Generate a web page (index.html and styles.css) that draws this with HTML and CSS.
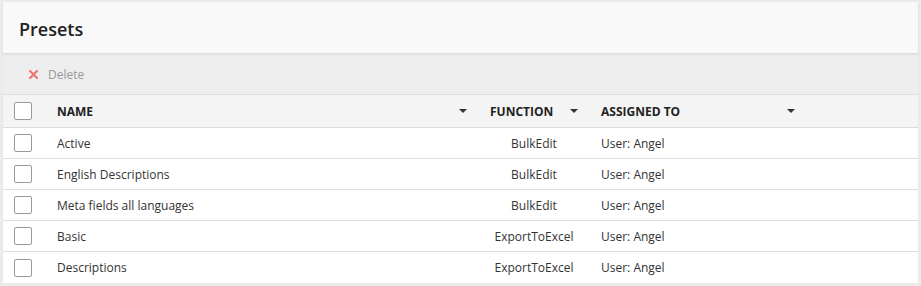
FILE: index.html
```html
<!DOCTYPE html>
<html>
<head>
<meta charset="utf-8">
<link rel="stylesheet" href="styles.css">
</head>
<body>
<div class="panel">
  <div class="panel-head">Presets</div>
  <div class="toolbar">
    <span class="btn-delete"><svg class="x-icon" width="9" height="9" viewBox="0 0 9 9"><path d="M1 1L8 8M8 1L1 8" stroke="#f27474" stroke-width="2.2" stroke-linecap="square"/></svg>Delete</span>
  </div>
  <div class="grid">
    <div class="row head">
      <div class="cell cb"><span class="box"></span></div>
      <div class="cell name">NAME<span class="caret"></span></div>
      <div class="cell func">FUNCTION<span class="caret"></span></div>
      <div class="cell assigned">ASSIGNED TO<span class="caret"></span></div>
      <div class="cell rest"></div>
    </div>
    <div class="row">
      <div class="cell cb"><span class="box"></span></div>
      <div class="cell name">Active</div>
      <div class="cell func">BulkEdit</div>
      <div class="cell assigned">User: Angel</div>
      <div class="cell rest"></div>
    </div>
    <div class="row">
      <div class="cell cb"><span class="box"></span></div>
      <div class="cell name">English Descriptions</div>
      <div class="cell func">BulkEdit</div>
      <div class="cell assigned">User: Angel</div>
      <div class="cell rest"></div>
    </div>
    <div class="row">
      <div class="cell cb"><span class="box"></span></div>
      <div class="cell name">Meta fields all languages</div>
      <div class="cell func">BulkEdit</div>
      <div class="cell assigned">User: Angel</div>
      <div class="cell rest"></div>
    </div>
    <div class="row">
      <div class="cell cb"><span class="box"></span></div>
      <div class="cell name">Basic</div>
      <div class="cell func">ExportToExcel</div>
      <div class="cell assigned">User: Angel</div>
      <div class="cell rest"></div>
    </div>
    <div class="row last">
      <div class="cell cb"><span class="box"></span></div>
      <div class="cell name">Descriptions</div>
      <div class="cell func">ExportToExcel</div>
      <div class="cell assigned">User: Angel</div>
      <div class="cell rest"></div>
    </div>
  </div>
</div>
</body>
</html>
```
FILE: styles.css
```css
html, body {
  margin: 0;
  padding: 0;
  background: #ebebeb;
}
body {
  padding: 2px 3px 0 3px;
  font-family: "Open Sans", "Noto Sans", sans-serif;
  font-size: 12px;
  color: #333;
}
.panel {
  width: 915px;
  background: #fff;
  box-shadow: 0 1px 1px rgba(0,0,0,0.08);
}
.panel-head {
  height: 52px;
  box-sizing: border-box;
  padding: 15px 0 0 16px;
  background: #f9f9f9;
  font-size: 18px;
  font-weight: 600;
  color: #222;
  border-bottom: 1px solid #dcdcdc;
  box-shadow: 0 1px 2px rgba(0,0,0,0.06);
  position: relative;
}
.toolbar {
  height: 41px;
  box-sizing: border-box;
  background: #eeeeee;
  border-bottom: 1px solid #e0e0e0;
  display: flex;
  align-items: center;
  padding-left: 26px;
}
.btn-delete {
  display: flex;
  align-items: center;
  color: #999;
  font-size: 12px;
}
.x-icon {
  margin-right: 10px;
}
.row {
  display: grid;
  grid-template-columns: 42px 433px 112px 215px 1fr;
  height: 31px;
  box-sizing: border-box;
  border-bottom: 1px solid #dedede;
  align-items: center;
}
.row.head {
  height: 33px;
  background: #f4f4f4;
  font-weight: 700;
  color: #222;
  border-bottom: 1px solid #dcdcdc;
}
.row.last {
  border-bottom: none;
}
.cell {
  display: flex;
  align-items: center;
  height: 100%;
  white-space: nowrap;
}
.cell.cb {
  padding-left: 11px;
}
.box {
  width: 16px;
  height: 16px;
  border: 1px solid #9a9a9a;
  border-radius: 2px;
  background: #fff;
}
.cell.name {
  padding: 0 11px 0 12px;
  justify-content: space-between;
}
.row:not(.head) .cell.name {
  justify-content: flex-start;
}
.cell.func {
  padding: 0 12px;
  justify-content: center;
}
.row.head .cell.func {
  justify-content: space-between;
}
.cell.assigned {
  padding: 0 10px 0 11px;
  justify-content: space-between;
}
.row:not(.head) .cell.assigned {
  justify-content: flex-start;
}
.caret {
  width: 0;
  height: 0;
  border-left: 4px solid transparent;
  border-right: 4px solid transparent;
  border-top: 4px solid #333;
}
```
